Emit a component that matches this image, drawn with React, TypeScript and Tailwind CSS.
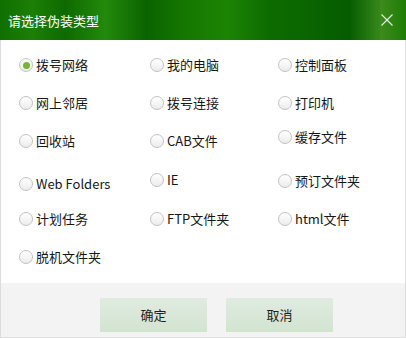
import React from "react";

const font = { fontFamily: '"Noto Sans CJK SC", "Noto Sans", sans-serif' };

function Radio({ label, checked, mt = 0 }: { label: string; checked?: boolean; mt?: number }) {
  return (
    <div className="flex items-center h-[18px] gap-[3px]" style={{ marginTop: mt }}>
      <span className="w-[14px] h-[14px] rounded-full border border-[#c2c2c2] bg-gradient-to-b from-[#ffffff] to-[#ececec] flex items-center justify-center shrink-0">
        {checked && <span className="w-[7px] h-[7px] rounded-full bg-[#78b536]" />}
      </span>
      <span className="text-[13px] leading-[18px] text-[#161616] whitespace-nowrap">{label}</span>
    </div>
  );
}

function Row({ h, cells }: { h: number; cells: { label: string; checked?: boolean; mt?: number }[] }) {
  return (
    <div className="flex items-start" style={{ height: h }}>
      <div className="w-[131px]">{cells[0] && <Radio {...cells[0]} />}</div>
      <div className="w-[128px]">{cells[1] && <Radio {...cells[1]} />}</div>
      <div>{cells[2] && <Radio {...cells[2]} />}</div>
    </div>
  );
}

export default function App() {
  return (
    <div className="w-[406px] h-[338px] flex flex-col bg-white overflow-hidden" style={font}>
      <div
        className="h-[40px] flex items-center justify-between pl-[8px] pr-[13px] shrink-0"
        style={{
          background:
            "linear-gradient(90deg, #0f6f00 0%, #1c7f06 8%, #0e6a00 16%, #238a0c 26%, #0a6300 36%, #157800 46%, #1c8404 56%, #0d6c00 66%, #0a6500 76%, #055c00 86%, #3a8a1c 94%, #1e7d05 100%)",
        }}
      >
        <span className="text-white text-[13px] leading-none">请选择伪装类型</span>
        <svg width="12" height="12" viewBox="0 0 12 12">
          <path d="M0.5 0.5 L11.5 11.5 M11.5 0.5 L0.5 11.5" stroke="#e8eee6" strokeWidth="1.1" />
        </svg>
      </div>
      <div className="h-[243px] pt-[16px] pl-[18px] border-l border-r border-[#dcdcdc] shrink-0">
        <Row h={38} cells={[{ label: "拨号网络", checked: true }, { label: "我的电脑" }, { label: "控制面板" }]} />
        <Row h={34} cells={[{ label: "网上邻居" }, { label: "拨号连接" }, { label: "打印机" }]} />
        <Row h={43} cells={[{ label: "回收站", mt: 4 }, { label: "CAB文件", mt: 4 }, { label: "缓存文件", mt: 0 }]} />
        <Row h={39} cells={[{ label: "Web Folders", mt: 4 }, { label: "IE", mt: 0 }, { label: "预订文件夹", mt: 1 }]} />
        <Row h={38} cells={[{ label: "计划任务" }, { label: "FTP文件夹" }, { label: "html文件" }]} />
        <Row h={18} cells={[{ label: "脱机文件夹" }]} />
      </div>
      <div className="flex-1 bg-[#f3f3f3] border-l border-r border-b border-[#dcdcdc] pl-[99px] pt-[15px] flex gap-[19px]">
        <button className="w-[107px] h-[34px] bg-gradient-to-b from-[#e0ebe0] to-[#d2e4d0] text-[13px] text-[#1e1e1e]">
          确定
        </button>
        <button className="w-[107px] h-[34px] bg-gradient-to-b from-[#e0ebe0] to-[#d2e4d0] text-[13px] text-[#1e1e1e]">
          取消
        </button>
      </div>
    </div>
  );
}
